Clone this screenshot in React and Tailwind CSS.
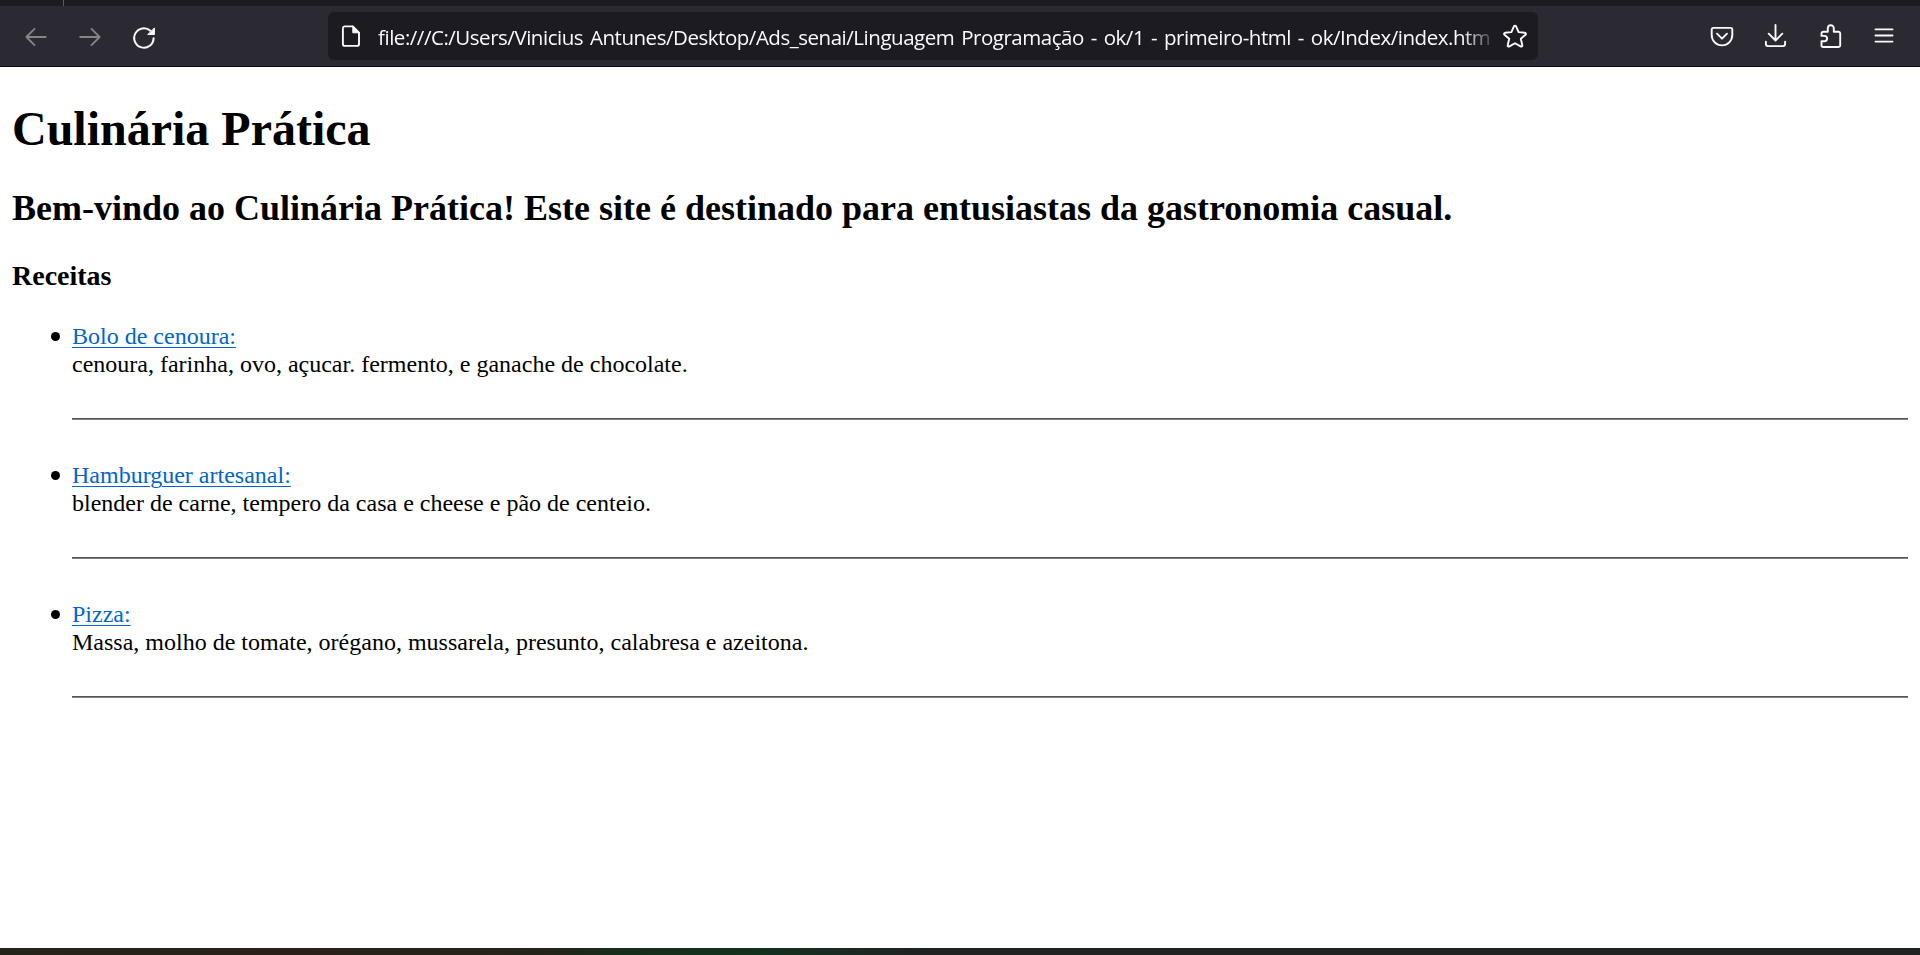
const recipes = [
  { name: "Bolo de cenoura:", text: "cenoura, farinha, ovo, açucar. fermento, e ganache de chocolate." },
  { name: "Hamburguer artesanal:", text: "blender de carne, tempero da casa e cheese e pão de centeio." },
  { name: "Pizza:", text: "Massa, molho de tomate, orégano, mussarela, presunto, calabresa e azeitona." },
];

function Icon({ className, children }) {
  return (
    <svg
      viewBox="0 0 24 24"
      className={`h-6 w-6 shrink-0 overflow-visible ${className ?? ""}`}
      fill="none"
      stroke="currentColor"
      strokeWidth="1.9"
      strokeLinecap="round"
      strokeLinejoin="round"
    >
      {children}
    </svg>
  );
}

function Toolbar() {
  return (
    <div className="flex h-[60px] shrink-0 items-center bg-[#2b2a33] pr-[24px] pl-[24px] text-[#fbfbfe]">
      <div className="flex w-[304px] items-center gap-[30px]">
        <Icon className="text-[#85848b]">
          <path d="M21.700 13H2.500M10.500 4.900 2.400 13l8.100 8.100" />
        </Icon>
        <Icon className="text-[#85848b]">
          <path d="M2.200 13h19.300M13.500 4.900l8.100 8.100-8.100 8.100" />
        </Icon>
        <Icon>
          <path d="M21.6 14.2A9.7 9.7 0 1 1 18.4 6.8" strokeWidth="2" />
          <path d="M22.4 4.3v6.2h-6.2z" fill="currentColor" strokeWidth="1" />
        </Icon>
      </div>
      <div className="flex h-12 w-[1210px] items-center rounded-[6px] bg-[#1c1b22] pr-[11px] pl-[11px]">
        <Icon>
          <path d="M5.500 2.400h8.300l6.200 6.200v11.300a2 2 0 0 1-2 2H5.900a2 2 0 0 1-2-2V4.400a2 2 0 0 1 2-2z" />
          <path d="M13.800 2.200v6.600h6.600z" fill="currentColor" strokeWidth="1" />
        </Icon>
        <div className="mt-[1px] ml-[15px] w-[1114px] font-['Open_Sans','Noto_Sans',sans-serif] text-[20.5px] leading-[30px] tracking-[-0.47px] [word-spacing:2px] whitespace-nowrap [mask-image:linear-gradient(to_right,black_calc(100%-30px),rgba(0,0,0,0.15))]">
          file:///C:/Users/Vinicius Antunes/Desktop/Ads_senai/Linguagem Programação - ok/1 - primeiro-html - ok/Index/index.htm
        </div>
        <Icon className="ml-[11px]">
          <path d="M12 1.700c.5 0 .9.300 1.100.7l2.500 5.700 6.200.6c1.100.1 1.500 1.300.7 2l-4.700 4.100 1.500 6.400c.2 1-.8 1.700-1.700 1.200L12 19.200l-5.600 3.200c-.9.500-1.900-.2-1.700-1.200l1.500-6.400-4.700-4.100c-.8-.7-.4-1.900.7-2l6.200-.6 2.500-5.700c.2-.4.6-.7 1.100-.7z" />
        </Icon>
      </div>
      <div className="ml-auto flex items-center gap-[30px]">
        <Icon>
          <path d="M3.500 3.900h17a1.800 1.800 0 0 1 1.800 1.800v5.400a10.300 10.300 0 0 1-20.600 0V5.700a1.800 1.800 0 0 1 1.800-1.800zM7 9.700l5 5 5-5" />
        </Icon>
        <Icon>
          <path d="M11.500 1v15M4.700 9.700l6.800 6.800 6.800-6.800M1.900 17.800v2.300a2 2 0 0 0 2 2h15.200a2 2 0 0 0 2-2v-2.300" />
        </Icon>
        <Icon>
          <path d="M9.800 7.700V4.200a3 3 0 0 1 6 0v3.500h4.600a1.800 1.800 0 0 1 1.800 1.800v11.700a1.800 1.800 0 0 1-1.800 1.800H5.300a1.800 1.800 0 0 1-1.800-1.800V17.300h2.900a2.700 2.700 0 0 0 0-5.400H3.500V9.500a1.800 1.800 0 0 1 1.800-1.800z" />
        </Icon>
        <Icon>
          <path d="M3.500 5.400h17M3.500 11.500h17M3.500 17.600h17" />
        </Icon>
      </div>
    </div>
  );
}

export default function App() {
  return (
    <div className="flex h-[955px] w-[1920px] flex-col overflow-hidden bg-white">
      <div className="flex h-[6px] shrink-0 bg-[#1c1b22] pl-[63px]">
        <div className="w-px bg-[#5b5a62]" />
      </div>
      <Toolbar />
      <div className="h-px shrink-0 bg-[#0c0c0d]" />
      <main className="flex-1 px-3 pt-[35px] font-['Liberation_Serif',serif] text-black">
        <h1 className="text-[48px] leading-[54px] font-bold">Culinária Prática</h1>
        <h2 className="mt-8 text-[36px] leading-10 font-bold">
          Bem-vindo ao Culinária Prática! Este site é destinado para entusiastas da gastronomia casual.
        </h2>
        <h3 className="mt-8 text-[28px] leading-8 font-bold">Receitas</h3>
        <ul className="mt-[30px] flex flex-col gap-[41px] pl-[39px] text-[24px] leading-7">
          {recipes.map((recipe) => (
            <li key={recipe.name} className="flex gap-3">
              <span className="mt-[10px] h-[9px] w-[9px] shrink-0 rounded-full bg-black" />
              <div className="flex-1">
                <a className="text-[#0066cc] underline decoration-1 underline-offset-[3px]">{recipe.name}</a>
                <p>{recipe.text}</p>
                <div className="mt-10 h-[2px] border-t border-b border-t-[#555] border-b-[#828282]" />
              </div>
            </li>
          ))}
        </ul>
      </main>
      <div className="h-[7px] shrink-0 bg-[linear-gradient(to_right,#24231a_0,#282119_290px,#24231a_540px,#172d1c_620px,#14301f_760px,#1c2822_860px,#202222_930px,#202222_100%)]" />
    </div>
  );
}
